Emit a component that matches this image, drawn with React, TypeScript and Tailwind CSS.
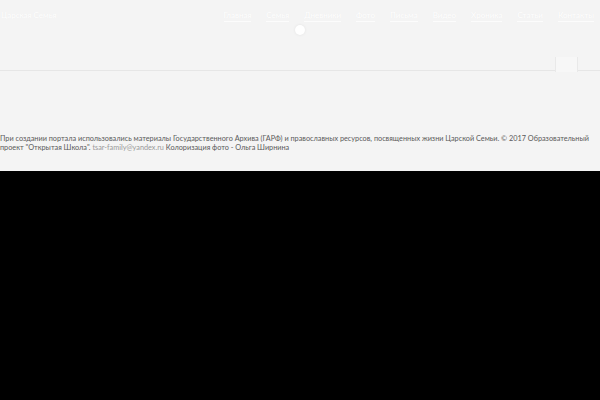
import React from "react";

const nav = ["Главная", "Семья", "Дневники", "Фото", "Письма", "Видео", "Хроника", "Статьи", "Контакты"];

export default function App() {
  return (
    <div className="w-[600px] h-[400px] bg-black flex flex-col overflow-hidden" style={{ fontFamily: "Lato, 'Open Sans', sans-serif" }}>
      <div className="h-[171px] bg-[#f4f4f4] flex flex-col">
        <div className="h-[57px] flex flex-col">
          <div className="flex items-start justify-between pt-[10px] pr-[6px]">
            <div className="text-white text-[8px] leading-[10px] pl-[1px] [text-shadow:0_0_1px_rgba(0,0,0,0.05)]">Царская Семья</div>
            <nav className="flex gap-[15px] text-white text-[8px] leading-[10px] [text-shadow:0_0_1px_rgba(0,0,0,0.05)]">
              {nav.map((n) => (
                <span key={n} className="border-b border-white/70 pb-[1px]">{n}</span>
              ))}
            </nav>
          </div>
          <div className="flex justify-center pt-[3px]">
            <div className="w-[10px] h-[10px] rounded-full bg-white shadow-[0_0_3px_rgba(0,0,0,0.08)]" />
          </div>
        </div>
        <div className="relative h-[14px] border-b border-[#e6e6e6]">
          <div className="absolute left-[555px] top-0 w-[23px] h-[15px] bg-[#f7f7f7] border-x border-[#e9e9e9]" />
        </div>
        <div className="pt-[63px] text-[7.3px] leading-[9px] text-[#5a5a5a]">
          При создании портала использовались материалы Государственного Архива (ГАРФ) и православных ресурсов, посвященных жизни Царской Семьи. © 2017 Образовательный проект "Открытая Школа". <span className="text-[#9a9a9a]">tsar-family@yandex.ru</span> Колоризация фото - Ольга Ширнина
        </div>
      </div>
    </div>
  );
}
